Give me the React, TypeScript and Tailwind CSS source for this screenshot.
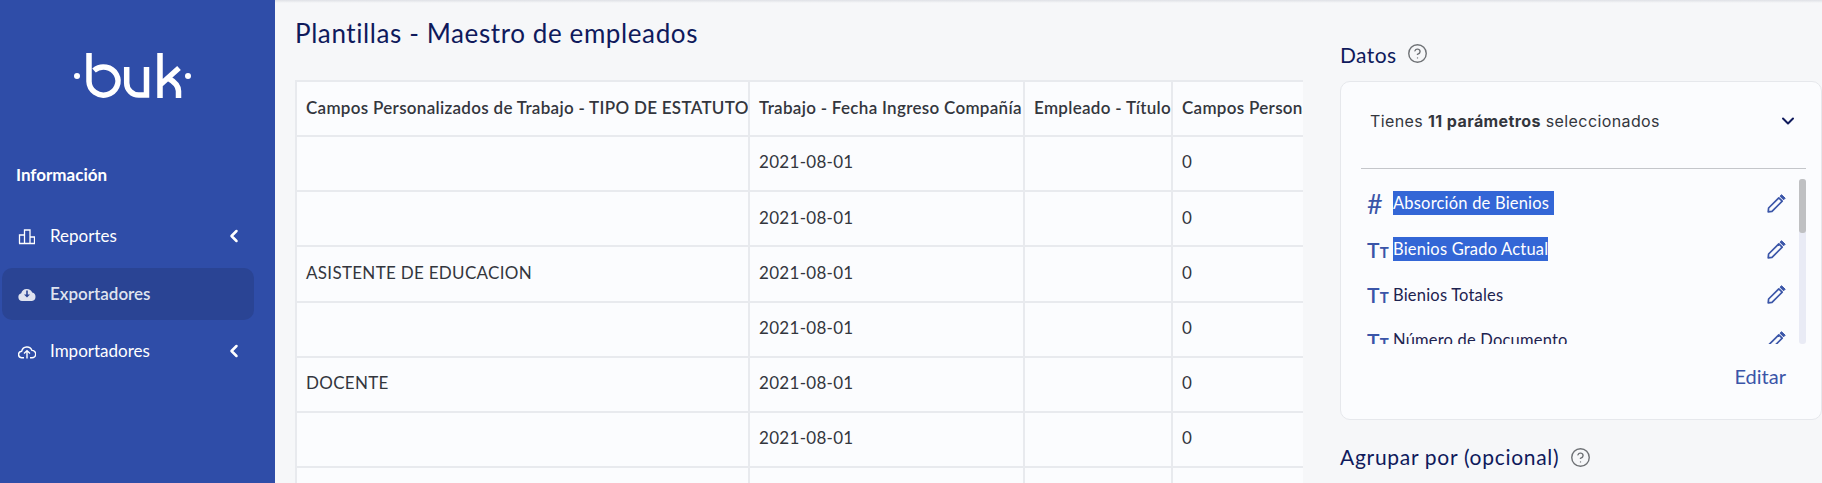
import React from "react";
import { ChevronLeft, ChevronDown, CircleHelp } from "lucide-react";

const rows = [
  "",
  "",
  "ASISTENTE DE EDUCACION",
  "",
  "DOCENTE",
  "",
];

const params = [
  { icon: "#", name: "Absorción de Bienios ", selected: true },
  { icon: "T", name: "Bienios Grado Actual", selected: true },
  { icon: "T", name: "Bienios Totales", selected: false },
  { icon: "T", name: "Número de Documento", selected: false },
];

function BukLogo() {
  return (
    <svg width="125" height="55" viewBox="70 50 125 55" fill="none" stroke="#fff" strokeWidth="5.5">
      <circle cx="77" cy="76" r="3" fill="#fff" stroke="none" />
      <circle cx="188" cy="76" r="3" fill="#fff" stroke="none" />
      <path d="M89 53V81.5A14.5 14 0 1 0 94 70.5" />
      <path d="M126.7 67V83A12 12 0 0 0 138.7 95H146.5V67" />
      <path d="M160 53V98M160 85L179 68M168 78C175 82 178.5 86 178.5 91V98" />
    </svg>
  );
}

function ChartIcon() {
  return (
    <svg width="17" height="17" viewBox="0 0 17 17" fill="none" stroke="#fff" strokeWidth="1.3">
      <path d="M1 15.5H16.5V9H12V15.5M12 15.5V9M12 9V2H6.5V15.5M6.5 7H1.5V15.5" />
    </svg>
  );
}

function CloudDownIcon() {
  return (
    <svg width="18" height="14" viewBox="0 0 18 14">
      <path
        fill="#dfe3ef"
        fillRule="evenodd"
        d="M4 14A4 4 0 0 1 3.2 6.2A5.8 5.8 0 0 1 14.2 5.6A4.3 4.3 0 0 1 14 14ZM8.2 3.5V7.6H6L9 10.5L12 7.6H9.8V3.5Z"
      />
    </svg>
  );
}

function CloudUpIcon() {
  return (
    <svg width="18" height="15" viewBox="0 0 18 15" fill="none" stroke="#fff" strokeWidth="1.4">
      <path d="M6 13.8H4A3.3 3.3 0 0 1 3.7 7.2A5.4 5.4 0 0 1 14 6.4A3.7 3.7 0 0 1 14 13.8H12" />
      <path d="M9 14.5V7M6 9.5L9 6.6L12 9.5" />
    </svg>
  );
}

function PencilIcon() {
  return (
    <svg width="19" height="19" viewBox="0 0 19 19" fill="none">
      <path d="M1.6 14L11.8 3.8L15.2 7.2L5 17.4L1.2 17.8Z" stroke="#3a55a8" strokeWidth="1.7" strokeLinejoin="round" />
      <path d="M13 2.2L14.6 0.8L18.2 4.2L16.6 5.8Z" fill="#3a55a8" stroke="#3a55a8" strokeWidth="1" strokeLinejoin="round" />
    </svg>
  );
}

function NavItem({ icon, label, chevron, active }: { icon: React.ReactNode; label: string; chevron?: boolean; active?: boolean }) {
  return (
    <div
      className={
        "ml-[2px] mr-[21px] flex h-[52px] items-center rounded-[10px] pl-[16px] pr-[10px] text-[17px] " +
        (active ? "bg-[#2a4494] font-semibold text-[#dfe3ef]" : "text-white")
      }
    >
      <span className="flex w-[32px] items-center">{icon}</span>
      <span className="flex-1">{label}</span>
      {chevron && <ChevronLeft size={20} strokeWidth={3} className="text-white" />}
    </div>
  );
}

function ParamIcon({ kind }: { kind: string }) {
  if (kind === "#") {
    return <span className="w-[26px] text-[27px] leading-none text-[#3a55a8]">#</span>;
  }
  return (
    <span className="flex w-[26px] items-end text-[#3a55a8]">
      <span className="text-[21px] leading-none font-semibold">T</span>
      <span className="text-[15px] leading-none font-bold">T</span>
    </span>
  );
}

export default function App() {
  return (
    <div className="flex h-[483px] w-[1822px] overflow-hidden bg-[#f6f7f9] font-['Lato',sans-serif]">
      {/* Sidebar */}
      <aside className="w-[275px] shrink-0 bg-[#2f4da8]">
        <div className="flex h-[132px] items-start pt-[50px] pl-[70px]">
          <BukLogo />
        </div>
        <div className="pl-[16px] pt-[31px] pb-[24px] text-[17px] leading-[24px] font-bold text-white">Información</div>
        <div className="mt-[-1px] flex flex-col gap-[5.5px]">
          <NavItem icon={<ChartIcon />} label="Reportes" chevron />
          <NavItem icon={<CloudDownIcon />} label="Exportadores" active />
          <NavItem icon={<CloudUpIcon />} label="Importadores" chevron />
        </div>
      </aside>

      {/* Main */}
      <main className="relative flex min-w-0 flex-1">
        <div className="absolute inset-x-0 top-0 h-[3px] bg-gradient-to-b from-[#dfe1e6] to-transparent" />

        <section className="w-[1028px] shrink-0 pl-[20px]">
          <h1 className="pt-[17px] pb-[1px] text-[26px] leading-[32px] tracking-[0.6px] text-[#0f1a5c]">Plantillas - Maestro de empleados</h1>
          <div className="mt-[30px] overflow-hidden">
            <table className="w-[1200px] table-fixed border-collapse bg-[#fbfcfe] text-[17px] tracking-[0.3px] text-[#33363d]">
              <colgroup>
                <col className="w-[453px]" />
                <col className="w-[275px]" />
                <col className="w-[148px]" />
                <col />
              </colgroup>
              <thead>
                <tr className="h-[55px]">
                  {["Campos Personalizados de Trabajo - TIPO DE ESTATUTO", "Trabajo - Fecha Ingreso Compañía", "Empleado - Título", "Campos Personalizados"].map((h) => (
                    <th key={h} className="overflow-hidden border-2 border-[#e8eaee] pl-[9px] pb-[1px] text-left font-semibold whitespace-nowrap">
                      {h}
                    </th>
                  ))}
                </tr>
              </thead>
              <tbody>
                {rows.map((r, i) => (
                  <tr key={i} className="h-[55.2px]">
                    <td className="border-2 border-[#e8eaee] pl-[9px] pb-[3px]">{r}</td>
                    <td className="border-2 border-[#e8eaee] pl-[9px] pb-[3px]">2021-08-01</td>
                    <td className="border-2 border-[#e8eaee] pl-[9px]"></td>
                    <td className="border-2 border-[#e8eaee] pl-[9px] pb-[3px]">0</td>
                  </tr>
                ))}
                <tr className="h-[55.2px]">
                  <td className="border-2 border-[#e8eaee]"></td>
                  <td className="border-2 border-[#e8eaee]"></td>
                  <td className="border-2 border-[#e8eaee]"></td>
                  <td className="border-2 border-[#e8eaee]"></td>
                </tr>
              </tbody>
            </table>
          </div>
        </section>

        {/* Panel derecho */}
        <section className="min-w-0 flex-1 pl-[37px]">
          <div className="flex h-[81px] items-start gap-[11px] pt-[41px]">
            <h2 className="text-[21px] leading-[28px] tracking-[0.4px] text-[#0f1a5c]">Datos</h2>
            <CircleHelp size={21} strokeWidth={1.6} className="mt-[2px] text-[#6f7276]" />
          </div>
          <div className="h-[339px] rounded-[10px] border border-[#e6e8ec] bg-[#fbfcfe] pl-[20px] pr-[15px]">
            <div className="flex h-[87px] items-center justify-between border-b border-[#c4c6ca] pb-[8px] pl-[9px] pr-[1px] font-['Inter',sans-serif] text-[16px] tracking-[0.4px] text-[#33363d]">
              <span>
                Tienes <b>11 parámetros</b> seleccionados
              </span>
              <ChevronDown size={20} strokeWidth={2.4} className="mr-[7px] text-[#0f1a5c]" />
            </div>
            <div className="relative mt-[10px] h-[165px] overflow-hidden pl-[6px] pr-[20px]">
              <div className="absolute top-0 right-0 h-[165px] w-[7px] rounded-[3px] bg-[#e9ebf5]">
                <div className="h-[54px] rounded-[3px] bg-[#bfc0c2]" />
              </div>
              {params.map((p) => (
                <div key={p.name} className="flex h-[45.6px] items-center pt-[4px] text-[16.5px] tracking-[0.2px] text-[#1d2350]">
                  <ParamIcon kind={p.icon} />
                  <span className="flex-1">
                    <span className={"whitespace-pre " + (p.selected ? "bg-[#3366d6] py-[2px] text-white" : "")}>{p.name}</span>
                  </span>
                  <PencilIcon />
                </div>
              ))}
            </div>
            <div className="flex h-[64px] items-center justify-end pr-[20px] text-[20px] text-[#3a55a8]">Editar</div>
          </div>
          <div className="mt-[23px] flex items-center gap-[11px]">
            <h2 className="text-[21px] leading-[28px] tracking-[0.7px] text-[#0f1a5c]">Agrupar por (opcional)</h2>
            <CircleHelp size={21} strokeWidth={1.6} className="text-[#6f7276]" />
          </div>
        </section>
      </main>
    </div>
  );
}
